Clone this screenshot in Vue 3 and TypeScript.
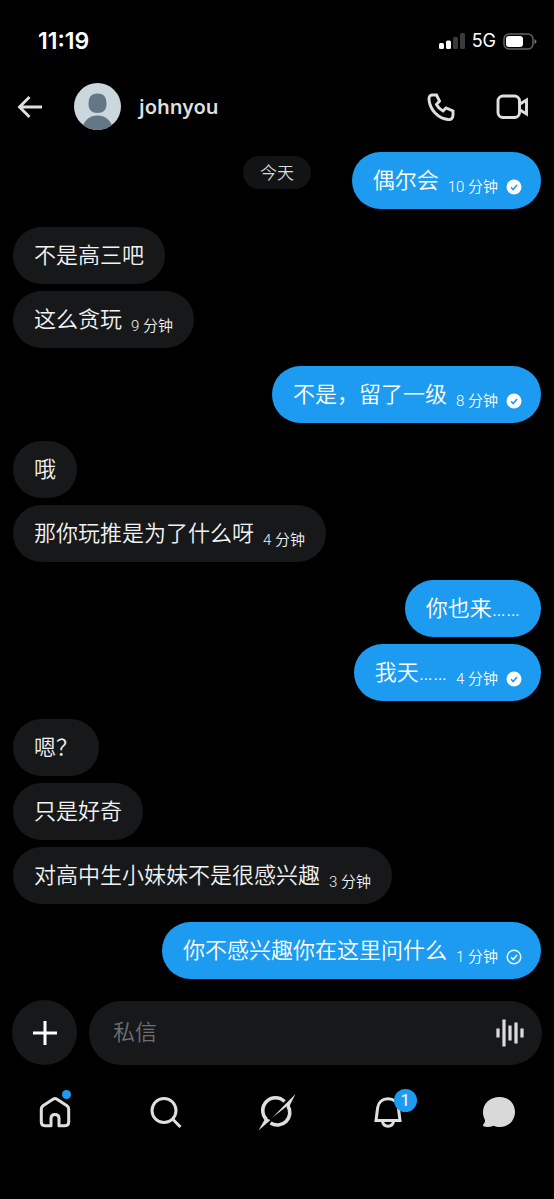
<script setup lang="ts">
import { ref } from 'vue'

type Receipt = 'read' | 'sent'

interface Message {
  text: string
  time?: string
  receipt?: Receipt
}

interface Group {
  mine: boolean
  messages: Message[]
}

const draft = ref('')

const groups: Group[] = [
  { mine: true, messages: [{ text: '偶尔会', time: '10 分钟', receipt: 'read' }] },
  { mine: false, messages: [{ text: '不是高三吧' }, { text: '这么贪玩', time: '9 分钟' }] },
  { mine: true, messages: [{ text: '不是，留了一级', time: '8 分钟', receipt: 'read' }] },
  { mine: false, messages: [{ text: '哦' }, { text: '那你玩推是为了什么呀', time: '4 分钟' }] },
  { mine: true, messages: [{ text: '你也来……' }, { text: '我天……', time: '4 分钟', receipt: 'read' }] },
  {
    mine: false,
    messages: [{ text: '嗯？' }, { text: '只是好奇' }, { text: '对高中生小妹妹不是很感兴趣', time: '3 分钟' }],
  },
  { mine: true, messages: [{ text: '你不感兴趣你在这里问什么', time: '1 分钟', receipt: 'sent' }] },
]
</script>

<template>
  <div class="screen">
    <div class="status">
      <span class="clock">11:19</span>
      <div class="signals">
        <svg width="26" height="16" viewBox="0 0 26 16" aria-hidden="true">
          <rect x="0" y="10" width="5" height="6" rx="1.5" fill="#fff" />
          <rect x="7" y="7.5" width="5" height="8.5" rx="1.5" fill="#fff" />
          <rect x="14" y="4" width="5" height="12" rx="1.5" fill="#3a3a3a" />
          <rect x="21" y="0" width="5" height="16" rx="1.5" fill="#3a3a3a" />
        </svg>
        <span class="network">5G</span>
        <svg width="34" height="17" viewBox="0 0 34 17" aria-hidden="true">
          <rect x="1" y="1" width="29" height="15" rx="5" fill="none" stroke="#636363" stroke-width="1.5" />
          <rect x="3" y="3" width="17" height="11" rx="3" fill="#fff" />
          <path d="M31.500 6Q33.500 7 33.500 8.500Q33.500 10 31.500 11Z" fill="#777" />
        </svg>
      </div>
    </div>

    <header class="header">
      <button class="icon-button" type="button" aria-label="返回">
        <svg width="26" height="24" viewBox="0 0 26 24" fill="none" stroke="#dfdfdf" stroke-width="2.9">
          <path d="M25 12H2.500M12.500 2L2.500 12L12.500 22" />
        </svg>
      </button>
      <svg class="avatar" width="47" height="47" viewBox="0 0 47 47" aria-hidden="true">
        <defs>
          <clipPath id="face"><circle cx="23.5" cy="23.5" r="23.5" /></clipPath>
        </defs>
        <g clip-path="url(#face)">
          <rect width="47" height="47" fill="#ccd6dd" />
          <path d="M23.500 10.500c6.500 0 9 4 9 10.500 0 6-3.500 9-9 9s-9-3-9-9c0-6.500 2.500-10.500 9-10.500Z" fill="#657786" />
          <path d="M8 47c1-9 7-14.500 15.500-14.500S38 38 39 47Z" fill="#657786" />
        </g>
      </svg>
      <h1 class="name">johnyou</h1>
      <button class="icon-button call" type="button" aria-label="语音通话">
        <svg width="28" height="28" viewBox="0 0 28 28" fill="none" stroke="#dfdfdf" stroke-width="2.9">
          <path d="M5 2h4.500l3 6-3 3.500c1.500 3 3.500 5 6.500 6.500l3-3 7 3V22c0 3-2 5-5 4.500C11 25.500 3 17 2 6.500 1.800 4 3 2 5 2Z" />
        </svg>
      </button>
      <button class="icon-button" type="button" aria-label="视频通话">
        <svg width="33" height="26" viewBox="0 0 33 26" fill="none" stroke="#dfdfdf" stroke-width="2.9">
          <rect x="2" y="2" width="21.5" height="21.5" rx="5" />
          <path d="M24 10l6.500-4v14L24 16" />
        </svg>
      </button>
    </header>

    <main class="thread">
      <span class="day">今天</span>
      <section v-for="(group, g) in groups" :key="g" class="group" :class="{ mine: group.mine }">
        <div v-for="(message, m) in group.messages" :key="m" class="bubble">
          <span class="text">{{ message.text }}</span>
          <span v-if="message.time" class="time">{{ message.time }}</span>
          <svg v-if="message.receipt" class="receipt" width="16" height="16" viewBox="0 0 16 16" fill="none" aria-hidden="true">
            <template v-if="message.receipt === 'read'">
              <circle cx="8" cy="8" r="7.5" fill="#fff" />
              <path d="M5 8.300l2.200 2.200L11 6" stroke="#1d9bf0" stroke-width="1.6" />
            </template>
            <template v-else>
              <circle cx="8" cy="8" r="6.8" stroke="#e4f4ff" stroke-width="1.5" />
              <path d="M5 8.300l2.200 2.200L11 6" stroke="#e4f4ff" stroke-width="1.6" />
            </template>
          </svg>
        </div>
      </section>
    </main>

    <form class="composer" @submit.prevent>
      <button class="add" type="button" aria-label="添加">
        <svg width="24" height="24" viewBox="0 0 24 24" stroke="#fff" stroke-width="3"><path d="M12 0V24M0 12H24" /></svg>
      </button>
      <div class="field">
        <input v-model="draft" class="input" type="text" placeholder="私信" aria-label="私信" />
        <button class="icon-button" type="button" aria-label="语音消息">
          <svg width="28" height="28" viewBox="0 0 28 28" stroke="#dcdcdc" stroke-width="3.2">
            <path d="M2 9.500v9M8 0.500v27M14 6.500v15M20 3.500v21M26 9.500v9" />
          </svg>
        </button>
      </div>
    </form>

    <nav class="tabs">
      <a class="tab" href="#home" aria-label="主页">
        <svg width="32" height="32" viewBox="0 0 32 32" fill="none" stroke="#dfdfdf" stroke-width="3">
          <path d="M14 3.200Q16 2 18 3.200L28 9.700Q29.700 11 29.700 13V26Q29.700 29.700 26 29.700H20V22.500Q20 18.500 16 18.500Q12 18.500 12 22.500V29.700H6Q2.300 29.700 2.300 26V13Q2.300 11 4 9.700Z" stroke-linejoin="round" />
        </svg>
        <span class="dot"></span>
      </a>
      <a class="tab" href="#search" aria-label="搜索">
        <svg width="32" height="32" viewBox="0 0 32 32" fill="none" stroke="#dfdfdf" stroke-width="3">
          <circle cx="14" cy="14.5" r="12" />
          <path d="M22.500 23L30.500 31" />
        </svg>
      </a>
      <a class="tab" href="#grok" aria-label="Grok">
        <svg width="38" height="38" viewBox="0 0 38 38" aria-hidden="true">
          <path d="M26.500 8.500A12.500 12.500 0 0 0 8.500 26.500" fill="none" stroke="#dfdfdf" stroke-width="3.6" />
          <path d="M12.500 30A12.500 12.500 0 0 0 30 13" fill="none" stroke="#dfdfdf" stroke-width="3.6" />
          <path d="M37.500 1C34 8 32.500 11 31 14.500L28.500 13.500L14.500 24.500L28 10.500Z" fill="#dfdfdf" />
          <path d="M0.500 37.500L7.500 25L12.500 27Z" fill="#dfdfdf" />
        </svg>
      </a>
      <a class="tab" href="#notifications" aria-label="通知">
        <svg width="32" height="32" viewBox="0 0 32 32" fill="none" stroke="#dfdfdf" stroke-width="3">
          <path d="M4 24.500L5.600 12C6.400 6 10.500 2.800 16 2.800S25.600 6 26.400 12L28 24.500Z" />
          <path d="M10.500 25.500C11 28.500 13 30.200 16 30.200S21 28.500 21.500 25.500" />
        </svg>
        <span class="count">1</span>
      </a>
      <a class="tab" href="#messages" aria-label="私信">
        <svg width="34" height="32" viewBox="0 0 34 32" fill="#d9d9d9">
          <path d="M17.500 1C27 1 33 7.500 33 15.800S27 31 18 31C15.500 31 13.500 30.500 11.500 29.700C8.500 31 5 31.300 2 30.500C.6 30 .8 28.700 1.800 27.800C3 26.500 3.200 25 2.800 23.500C1.500 21 1 18.500 1 16C1 7.500 8 1 17.500 1Z" />
        </svg>
      </a>
    </nav>
  </div>
</template>

<style>
body {
  margin: 0;
  background: #000;
}
</style>

<style scoped>
.screen {
  box-sizing: border-box;
  display: flex;
  flex-direction: column;
  min-height: 100vh;
  background: #000;
  color: #fff;
  font-family: Roboto, "Noto Sans CJK SC", sans-serif;
  font-weight: 350;
}

.status {
  display: flex;
  align-items: center;
  justify-content: space-between;
  height: 32px;
  padding: 25px 17px 0 38px;
}

.clock {
  font: 600 23px/32px Inter, sans-serif;
}

.signals {
  display: flex;
  align-items: center;
  gap: 7px;
}

.network {
  font: 400 18px/32px Inter, sans-serif;
}

.header {
  display: flex;
  align-items: center;
  height: 47px;
  padding: 26px 25px 22px 17px;
}

.icon-button {
  display: flex;
  padding: 0;
  border: 0;
  background: none;
  cursor: pointer;
}

.avatar {
  margin: 0 18px 0 31px;
}

.name {
  flex: 1;
  margin: 0;
  color: #dfdfdf;
  font: 600 20px/28px "Noto Sans", sans-serif;
}

.call {
  margin-right: 41px;
}

.thread {
  position: relative;
  display: flex;
  flex-direction: column;
  gap: 18px;
  padding: 0 13px;
}

.day {
  position: absolute;
  top: 4px;
  left: 50%;
  transform: translateX(-50%);
  padding: 1px 17px 0;
  border-radius: 17px;
  background: #121314;
  color: #dcdcdc;
  font-size: 17px;
  line-height: 32px;
}

.group {
  display: flex;
  flex-direction: column;
  align-items: flex-start;
  gap: 7px;
}

.group.mine {
  align-items: flex-end;
}

.bubble {
  display: flex;
  align-items: center;
  box-sizing: border-box;
  min-height: 57px;
  padding: 1px 21px 0;
  border-radius: 29px;
  background: #16181a;
  color: #f2f2f2;
}

.mine .bubble {
  background: #1d9bf0;
  color: #fff;
}

.text {
  font-size: 22px;
  line-height: 32px;
}

.time {
  margin: 11px 0 0 9px;
  font-size: 15px;
  line-height: 20px;
}

.receipt {
  margin: 11px -2px 0 8px;
}

.composer {
  display: flex;
  align-items: center;
  gap: 12px;
  padding: 21px 12px 0;
}

.add {
  display: flex;
  align-items: center;
  justify-content: center;
  width: 65px;
  height: 65px;
  border: 0;
  border-radius: 50%;
  background: #16181a;
}

.field {
  display: flex;
  flex: 1;
  align-items: center;
  box-sizing: border-box;
  height: 64px;
  padding: 0 18px 0 24px;
  border-radius: 32px;
  background: #16181a;
}

.input {
  flex: 1;
  min-width: 0;
  padding: 0;
  border: 0;
  outline: 0;
  background: none;
  color: #fff;
  font: 350 22px/32px Roboto, "Noto Sans CJK SC", sans-serif;
}

.input::placeholder {
  color: #6e7073;
  opacity: 1;
}

.tabs {
  display: grid;
  grid-template-columns: repeat(5, 1fr);
  padding-top: 28px;
}

.tab {
  position: relative;
  display: flex;
  align-items: center;
  justify-content: center;
  height: 38px;
  color: #fff;
  text-decoration: none;
}

.dot {
  position: absolute;
  top: -3px;
  left: calc(50% + 7px);
  width: 9px;
  height: 9px;
  border-radius: 50%;
  background: #1d9bf0;
}

.count {
  position: absolute;
  top: -4px;
  left: calc(50% + 6px);
  width: 23px;
  border-radius: 50%;
  background: #1d9bf0;
  font-size: 17px;
  font-weight: 400;
  line-height: 23px;
  text-align: center;
}
</style>
